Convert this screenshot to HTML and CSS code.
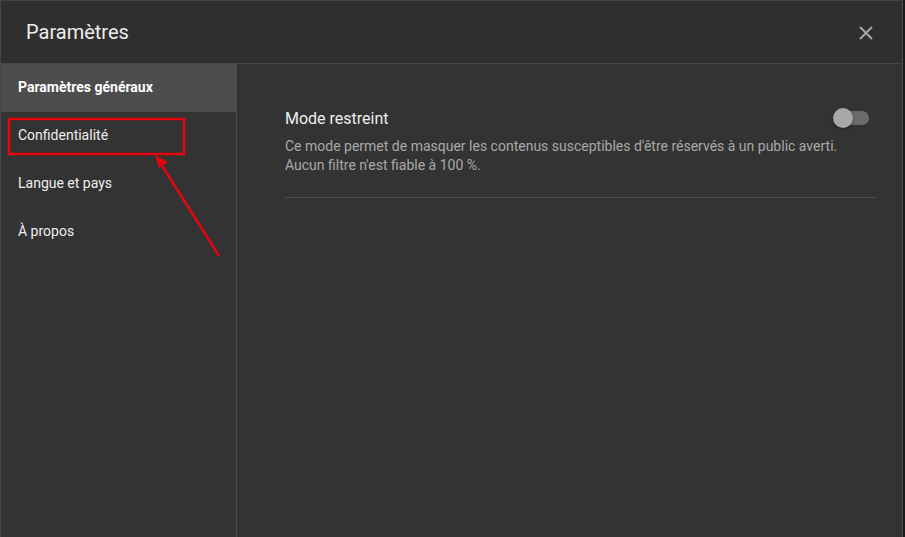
FILE: index.html
```html
<!DOCTYPE html>
<html lang="fr">
<head>
    <meta charset="UTF-8">
    <title>Paramètres</title>
    <link rel="stylesheet" href="styles.css">
</head>
<body>
    <div class="dialog">
        <div class="header">
            <h1>Paramètres</h1>
            <button class="close" aria-label="Fermer">
                <svg width="16" height="16" viewBox="0 0 16 16"><path d="M2 2 L14 14 M14 2 L2 14" stroke="#a9a9a9" stroke-width="1.8" fill="none"/></svg>
            </button>
        </div>
        <div class="body">
            <div class="sidebar">
                <div class="item active">Paramètres généraux</div>
                <div class="item">Confidentialité</div>
                <div class="item">Langue et pays</div>
                <div class="item">À propos</div>
            </div>
            <div class="content">
                <div class="setting">
                    <div class="setting-top">
                        <span class="setting-title">Mode restreint</span>
                        <span class="toggle"><span class="knob"></span></span>
                    </div>
                    <p class="setting-desc">Ce mode permet de masquer les contenus susceptibles d'être réservés à un public averti.<br>Aucun filtre n'est fiable à 100 %.</p>
                </div>
            </div>
        </div>

        <!-- annotation -->
        <svg class="annot" width="240" height="270" viewBox="0 0 240 270">
            <rect x="8" y="118" width="175" height="35" fill="none" stroke="#e4060c" stroke-width="2.5"/>
            <line x1="218" y1="255" x2="160" y2="163" stroke="#e4060c" stroke-width="2.5"/>
            <polygon points="154,154 167,161 158,167" fill="#e4060c"/>
        </svg>
    </div>
</body>
</html>
```

FILE: styles.css
```css
html, body {
    margin: 0;
    padding: 0;
    background: #1b1b1b;
}
body {
    font-family: Roboto, "Liberation Sans", Arial, sans-serif;
    width: 905px;
    height: 537px;
    overflow: hidden;
}
.dialog {
    position: relative;
    width: 901px;
    height: 536px;
    background: #333333;
    border-top: 1px solid #444;
    border-left: 1px solid #484848;
    border-right: 1px solid #4a4a4a;
    display: flex;
    flex-direction: column;
}
.header {
    height: 62px;
    background: #2f2f2f;
    border-bottom: 1px solid #474747;
    display: flex;
    align-items: center;
    justify-content: space-between;
    padding: 0 28px 0 25px;
}
.header h1 {
    margin: 0;
    font-size: 20px;
    font-weight: 400;
    color: #ededed;
}
.close {
    background: none;
    border: none;
    padding: 0;
    width: 16px;
    height: 16px;
    cursor: pointer;
    margin-top: 1px;
}
.body {
    flex: 1;
    display: flex;
}
.sidebar {
    width: 235px;
    border-right: 1px solid #4a4a4a;
}
.item {
    height: 48px;
    line-height: 46px;
    padding-left: 17px;
    font-size: 14px;
    color: #eeeeee;
}
.item.active {
    background: #4d4d4d;
    font-weight: 700;
    color: #ffffff;
}
.content {
    flex: 1;
    padding: 39px 25px 0 48px;
}
.setting {
    border-bottom: 1px solid #4d4d4d;
    padding-bottom: 22px;
}
.setting-top {
    display: flex;
    justify-content: space-between;
    align-items: center;
    height: 30px;
}
.setting-title {
    font-size: 16px;
    color: #eeeeee;
}
.toggle {
    position: relative;
    width: 34px;
    height: 14px;
    border-radius: 7px;
    background: #6b6b6b;
    margin-right: 8px;
}
.knob {
    position: absolute;
    left: -2px;
    top: -3px;
    width: 20px;
    height: 20px;
    border-radius: 50%;
    background: #a8a8a8;
    box-shadow: 0 1px 3px rgba(0, 0, 0, 0.4);
}
.setting-desc {
    margin: 4px 0 0;
    font-size: 14px;
    line-height: 19px;
    color: #a9a9a9;
}
.annot {
    position: absolute;
    left: 0;
    top: 0;
}
```
